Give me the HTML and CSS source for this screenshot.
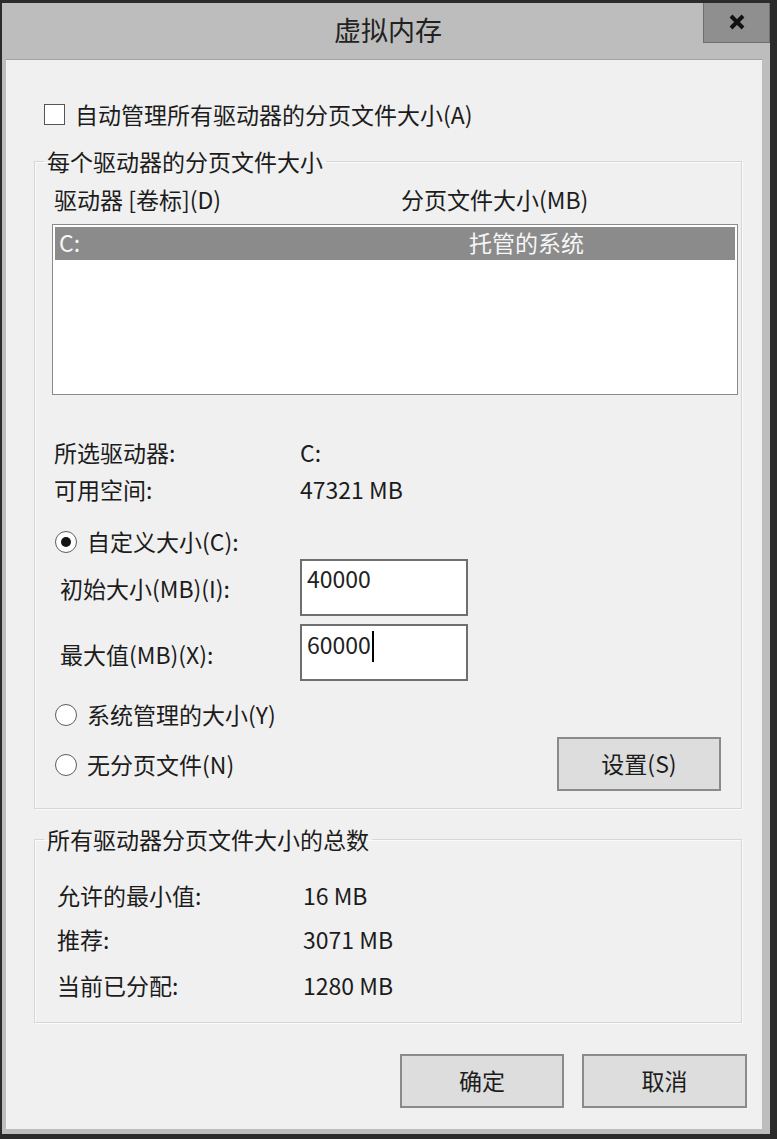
FILE: index.html
```
<!DOCTYPE html>
<html lang="zh-CN">
<head>
<meta charset="utf-8">
<title>虚拟内存</title>
<link rel="stylesheet" href="styles.css">
</head>
<body>
<div class="window">
  <div class="titlebar">
    <span class="title">虚拟内存</span>
    <div class="close">
      <svg width="20" height="18" viewBox="0 0 20 18"><path d="M4 3 L16 15 M16 3 L4 15" stroke="#111" stroke-width="4" fill="none"/></svg>
    </div>
  </div>
  <div class="client">
    <label class="auto">
      <span class="checkbox"></span>
      <span>自动管理所有驱动器的分页文件大小(A)</span>
    </label>

    <fieldset class="group group1">
      <legend>每个驱动器的分页文件大小</legend>
      <div class="gbody1">
        <div class="cols">
          <span>驱动器 [卷标](D)</span>
          <span>分页文件大小(MB)</span>
        </div>
        <div class="listbox">
          <div class="selrow">
            <span>C:</span>
            <span>托管的系统</span>
          </div>
        </div>
        <div class="info">
          <span>所选驱动器:</span><span>C:</span>
          <span>可用空间:</span><span>47321 MB</span>
        </div>
        <div class="radiorow r1">
          <span class="radio checked"></span>
          <span>自定义大小(C):</span>
        </div>
        <div class="fieldrow f1">
          <span class="flabel">初始大小(MB)(I):</span>
          <div class="field">40000</div>
        </div>
        <div class="fieldrow f2">
          <span class="flabel">最大值(MB)(X):</span>
          <div class="field">60000<span class="caret"></span></div>
        </div>
        <div class="radiorow r2">
          <span class="radio"></span>
          <span>系统管理的大小(Y)</span>
        </div>
        <div class="lastrow">
          <div class="radiorow">
            <span class="radio"></span>
            <span>无分页文件(N)</span>
          </div>
          <div class="btn">设置(S)</div>
        </div>
      </div>
    </fieldset>

    <fieldset class="group group2">
      <legend>所有驱动器分页文件大小的总数</legend>
      <div class="gbody2">
        <div class="trow"><span>允许的最小值:</span><span>16 MB</span></div>
        <div class="trow t2"><span>推荐:</span><span>3071 MB</span></div>
        <div class="trow t3"><span>当前已分配:</span><span>1280 MB</span></div>
      </div>
    </fieldset>

    <div class="buttons">
      <div class="btn">确定</div>
      <div class="btn">取消</div>
    </div>
  </div>
</div>
</body>
</html>
```
FILE: styles.css
```
html, body {
  margin: 0;
  padding: 0;
  background: #2b2b2b;
}
body {
  font-family: "Noto Sans CJK SC", "Noto Sans", sans-serif;
  color: #1c1c1c;
  font-size: 23px;
}
.window {
  width: 777px;
  height: 1139px;
  box-sizing: border-box;
  border-style: solid;
  border-color: #2b2b2b;
  border-width: 3px 7px 5px 2px;
  padding: 0 8px 5px 4px;
  background: #bdbdbd;
  display: flex;
  flex-direction: column;
}
.titlebar {
  height: 56px;
  flex: none;
  position: relative;
  display: flex;
  align-items: center;
  justify-content: center;
  border-bottom: 1px solid #a3a3a3;
  padding-left: 8px;
}
.title {
  font-size: 27px;
  line-height: 34px;
  color: #222;
  margin-top: -2px;
}
.close {
  position: absolute;
  top: 0;
  right: -8px;
  width: 67px;
  height: 40px;
  box-sizing: border-box;
  background: #8f8f8f;
  border: 1px solid #6e6e6e;
  border-top: none;
  display: flex;
  align-items: center;
  justify-content: center;
  padding-bottom: 2px;
}
.close svg {
  display: block;
}
.client {
  flex: 1;
  background: #f0f0f0;
  display: flex;
  flex-direction: column;
  align-items: flex-start;
}
.auto {
  margin-top: 40px;
  margin-left: 38px;
  height: 28px;
  display: flex;
  align-items: center;
  line-height: 28px;
}
.checkbox {
  width: 21px;
  height: 21px;
  box-sizing: border-box;
  border: 1px solid #555;
  background: #fff;
  margin-right: 10px;
}
.group {
  margin: 0 0 0 28px;
  padding: 0;
  width: 708px;
  box-sizing: border-box;
  border: 1px solid #d6d6d6;
  box-shadow: inset 1px 1px 0 #fbfbfb, 1px 1px 0 #fbfbfb;
  min-width: 0;
}
.group legend {
  margin-left: 9px;
  padding: 0 3px;
  line-height: 28px;
  height: 28px;
}
.group1 {
  margin-top: 19px;
}
.gbody1 {
  padding: 10px 0 17px 19px;
}
.cols {
  display: grid;
  grid-template-columns: 347px auto;
  line-height: 28px;
  height: 28px;
}
.listbox {
  margin-top: 11px;
  margin-left: -2px;
  width: 686px;
  height: 171px;
  box-sizing: border-box;
  border: 1px solid #8a8a8a;
  background: #fff;
  padding: 2px;
}
.selrow {
  height: 33px;
  background: #8b8b8b;
  color: #f6f6f6;
  display: grid;
  grid-template-columns: 410px auto;
  line-height: 31px;
  padding-left: 4px;
}
.info {
  margin-top: 43px;
  display: grid;
  grid-template-columns: 246px auto;
  row-gap: 9px;
  line-height: 28px;
}
.radiorow {
  display: flex;
  align-items: center;
  height: 28px;
  line-height: 28px;
  margin-left: 1px;
}
.radio {
  width: 22px;
  height: 22px;
  box-sizing: border-box;
  border: 1.5px solid #5e5e5e;
  border-radius: 50%;
  background: #fff;
  margin-right: 10px;
  margin-top: 2px;
  display: flex;
  align-items: center;
  justify-content: center;
}
.radio.checked::after {
  content: "";
  width: 10px;
  height: 10px;
  border-radius: 50%;
  background: #151515;
}
.r1 {
  margin-top: 24px;
}
.fieldrow {
  display: flex;
  align-items: flex-start;
  height: 57px;
}
.f1 {
  margin-top: 4px;
}
.f2 {
  margin-top: 8px;
}
.flabel {
  width: 240px;
  margin-left: 6px;
  line-height: 28px;
  padding-top: 15px;
}
.f2 .flabel {
  padding-top: 16px;
}
.field {
  width: 168px;
  height: 57px;
  box-sizing: border-box;
  border: 2px solid #6f6f6f;
  background: #fff;
  padding: 3px 0 0 5px;
  line-height: 28px;
  color: #222;
  display: flex;
  align-items: flex-start;
}
.f2 .field {
  padding-top: 4px;
}
.caret {
  display: inline-block;
  width: 2px;
  height: 31px;
  background: #000;
  margin-left: 1px;
  margin-top: 1px;
}
.r2 {
  margin-top: 19px;
}
.lastrow {
  margin-top: 9px;
  display: flex;
  align-items: center;
  justify-content: space-between;
  width: 667px;
}
.btn {
  width: 164px;
  height: 54px;
  box-sizing: border-box;
  border: 2px solid #8a8a8a;
  background: #dddddd;
  display: flex;
  align-items: center;
  justify-content: center;
  line-height: 28px;
  color: #1c1c1c;
  padding-bottom: 3px;
}
.group2 {
  margin-top: 16px;
}
.gbody2 {
  padding: 28px 0 23px 22px;
}
.trow {
  display: grid;
  grid-template-columns: 246px auto;
  height: 28px;
  line-height: 28px;
}
.t2 {
  margin-top: 16px;
}
.t3 {
  margin-top: 18px;
}
.buttons {
  margin-top: 31px;
  align-self: flex-end;
  margin-right: 15px;
  display: flex;
  gap: 18px;
}
.buttons .btn + .btn {
  width: 165px;
}
```
